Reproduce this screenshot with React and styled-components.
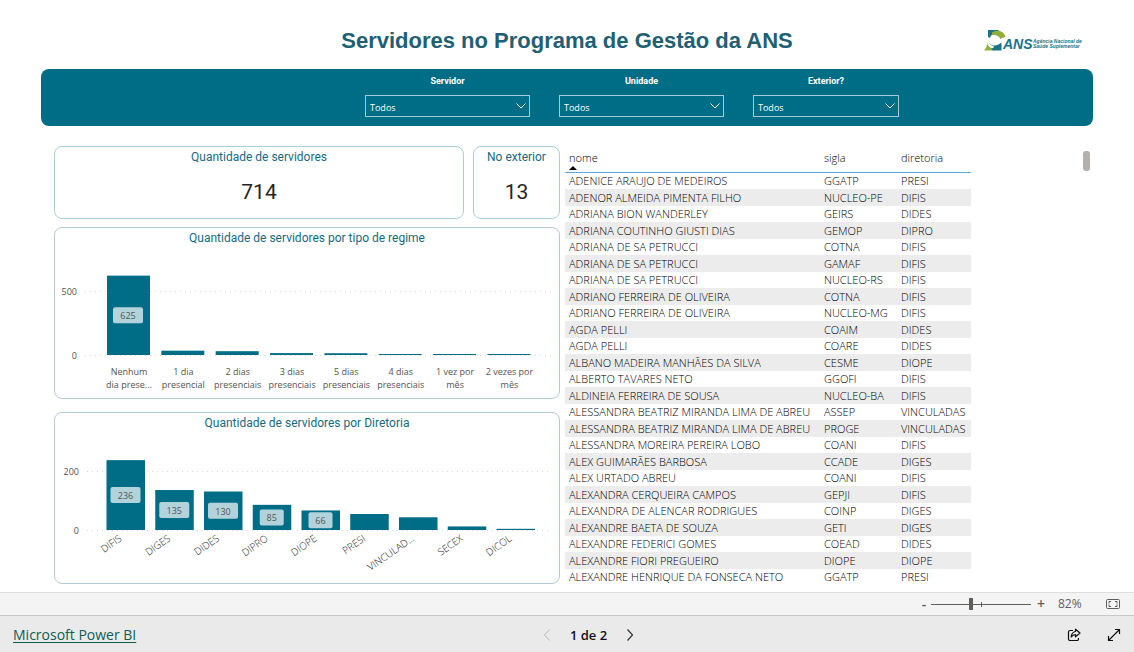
import { useState } from "react";
import styled, { createGlobalStyle } from "styled-components";

const UI_FONT = `"Open Sans", "Noto Sans", sans-serif`;
const TITLE_FONT = `Roboto, "Liberation Sans", sans-serif`;
const TEAL = "#006d87";

const filters = [
  { id: "servidor", label: "Servidor", width: 165 },
  { id: "unidade", label: "Unidade", width: 165 },
  { id: "exterior", label: "Exterior?", width: 146 },
];

const regimes = [
  { lines: ["Nenhum", "dia prese..."], value: 625 },
  { lines: ["1 dia", "presencial"], value: 34 },
  { lines: ["2 dias", "presenciais"], value: 30 },
  { lines: ["3 dias", "presenciais"], value: 15 },
  { lines: ["5 dias", "presenciais"], value: 14 },
  { lines: ["4 dias", "presenciais"], value: 8 },
  { lines: ["1 vez por", "mês"], value: 8 },
  { lines: ["2 vezes por", "mês"], value: 8 },
];

const diretorias = [
  { name: "DIFIS", value: 236 },
  { name: "DIGES", value: 135 },
  { name: "DIDES", value: 130 },
  { name: "DIPRO", value: 85 },
  { name: "DIOPE", value: 66 },
  { name: "PRESI", value: 54 },
  { name: "VINCULAD...", value: 43 },
  { name: "SECEX", value: 12 },
  { name: "DICOL", value: 4 },
];

const servidores = [
  ["ADENICE ARAUJO DE MEDEIROS", "GGATP", "PRESI"],
  ["ADENOR ALMEIDA PIMENTA FILHO", "NUCLEO-PE", "DIFIS"],
  ["ADRIANA BION WANDERLEY", "GEIRS", "DIDES"],
  ["ADRIANA COUTINHO GIUSTI DIAS", "GEMOP", "DIPRO"],
  ["ADRIANA DE SA PETRUCCI", "COTNA", "DIFIS"],
  ["ADRIANA DE SA PETRUCCI", "GAMAF", "DIFIS"],
  ["ADRIANA DE SA PETRUCCI", "NUCLEO-RS", "DIFIS"],
  ["ADRIANO FERREIRA DE OLIVEIRA", "COTNA", "DIFIS"],
  ["ADRIANO FERREIRA DE OLIVEIRA", "NUCLEO-MG", "DIFIS"],
  ["AGDA PELLI", "COAIM", "DIDES"],
  ["AGDA PELLI", "COARE", "DIDES"],
  ["ALBANO MADEIRA MANHÃES DA SILVA", "CESME", "DIOPE"],
  ["ALBERTO TAVARES NETO", "GGOFI", "DIFIS"],
  ["ALDINEIA FERREIRA DE SOUSA", "NUCLEO-BA", "DIFIS"],
  ["ALESSANDRA BEATRIZ MIRANDA LIMA DE ABREU", "ASSEP", "VINCULADAS"],
  ["ALESSANDRA BEATRIZ MIRANDA LIMA DE ABREU", "PROGE", "VINCULADAS"],
  ["ALESSANDRA MOREIRA PEREIRA LOBO", "COANI", "DIFIS"],
  ["ALEX GUIMARÃES BARBOSA", "CCADE", "DIGES"],
  ["ALEX URTADO ABREU", "COANI", "DIFIS"],
  ["ALEXANDRA CERQUEIRA CAMPOS", "GEPJI", "DIFIS"],
  ["ALEXANDRA DE ALENCAR RODRIGUES", "COINP", "DIGES"],
  ["ALEXANDRE BAETA DE SOUZA", "GETI", "DIGES"],
  ["ALEXANDRE FEDERICI GOMES", "COEAD", "DIDES"],
  ["ALEXANDRE FIORI PREGUEIRO", "DIOPE", "DIOPE"],
  ["ALEXANDRE HENRIQUE DA FONSECA NETO", "GGATP", "PRESI"],
];

function AnsLogo() {
  return (
    <Logo viewBox="0 0 100 22" role="img" aria-label="ANS">
      <path d="M4 0h10l3 2C11 2 7 4 6 8L4 7z" fill="#1a7488" />
      <path d="M8 2.500C13-1 20 1 21.500 7c-2 0-3.500 1-5 2C15 6 12 4.500 8 5z" fill="#94ae3c" />
      <path d="M3 11.500c0 4 3 7 8 7.500L10 20.500H0c2-2 3.500-5 3-9z" fill="#94ae3c" />
      <path d="M5 13c3 3.500 8 3.500 12.500-.5v8H9l-2-2c2 0 3-1 3-2-2-.5-4-1.500-5-3.500z" fill="#1a7488" />
      <LogoText x="19" y="19" $size={14}>ANS</LogoText>
      <LogoText x="49" y="13" $size={5}>Agência Nacional de</LogoText>
      <LogoText x="49" y="18" $size={5}>Saúde Suplementar</LogoText>
    </Logo>
  );
}

function Badge({ x, y, value }) {
  const width = value > 99 ? 30 : 24;
  return (
    <>
      <rect x={x - width / 2} y={y - 8} width={width} height="16" rx="2" fill="#b2d3dc" />
      <ChartText x={x} y={y + 4} textAnchor="middle">{value}</ChartText>
    </>
  );
}

function RegimeChart() {
  const zero = 107;
  const scale = 0.127;
  return (
    <Chart viewBox="0 0 504 150" role="img" aria-label="Servidores por tipo de regime">
      <GridLine x1="30" x2="497" y1="43.5" y2="43.5" />
      <GridLine x1="30" x2="497" y1="107.5" y2="107.5" />
      <ChartText x="22" y="47" textAnchor="end">500</ChartText>
      <ChartText x="22" y="111" textAnchor="end">0</ChartText>
      {regimes.map((item, i) => {
        const x = 52 + i * 54.35;
        const height = item.value * scale;
        return (
          <g key={i}>
            <rect x={x} y={zero - height} width="43" height={height} fill={TEAL} />
            {item.value > 60 && (
              <Badge x={x + 21} y={zero - height / 2} value={item.value} />
            )}
            <ChartText x={x + 22} y="127" textAnchor="middle">{item.lines[0]}</ChartText>
            <ChartText x={x + 22} y="140" textAnchor="middle">{item.lines[1]}</ChartText>
          </g>
        );
      })}
    </Chart>
  );
}

function DiretoriaChart() {
  const zero = 97;
  const scale = 0.296;
  return (
    <Chart viewBox="0 0 504 150" role="img" aria-label="Servidores por diretoria">
      <GridLine x1="32" x2="497" y1="38.5" y2="38.5" />
      <GridLine x1="32" x2="497" y1="97.5" y2="97.5" />
      <ChartText x="24" y="42" textAnchor="end">200</ChartText>
      <ChartText x="24" y="101" textAnchor="end">0</ChartText>
      {diretorias.map((item, i) => {
        const x = 51.5 + i * 48.75;
        const height = item.value * scale;
        return (
          <g key={item.name}>
            <rect x={x} y={zero - height} width="38.5" height={height} fill={TEAL} />
            {item.value > 60 && (
              <Badge x={x + 19} y={zero - height / 2} value={item.value} />
            )}
            <AxisName
              textAnchor="end"
              transform={`translate(${x + 16} 107) rotate(-35)`}
            >
              {item.name}
            </AxisName>
          </g>
        );
      })}
    </Chart>
  );
}

export default function App() {
  const [zoom, setZoom] = useState(40);

  return (
    <Page>
      <GlobalStyle />
      <Header>
        <Title>Servidores no Programa de Gestão da ANS</Title>
        <AnsLogo />
      </Header>

      <FilterBar>
        {filters.map((filter) => (
          <Filter key={filter.id} $width={filter.width}>
            <FilterLabel htmlFor={filter.id}>{filter.label}</FilterLabel>
            <SelectBox>
              <Select id={filter.id}>
                <option>Todos</option>
              </Select>
              <SelectArrow viewBox="0 0 10 6">
                <path d="M.5.5 5 5 9.5.5" />
              </SelectArrow>
            </SelectBox>
          </Filter>
        ))}
      </FilterBar>

      <Content>
        <Column>
          <Cards>
            <Card>
              <PanelTitle>Quantidade de servidores</PanelTitle>
              <CardValue>714</CardValue>
            </Card>
            <Card>
              <PanelTitle>No exterior</PanelTitle>
              <CardValue>13</CardValue>
            </Card>
          </Cards>
          <Panel>
            <PanelTitle>Quantidade de servidores por tipo de regime</PanelTitle>
            <RegimeChart />
          </Panel>
          <Panel $spaced>
            <PanelTitle>Quantidade de servidores por Diretoria</PanelTitle>
            <DiretoriaChart />
          </Panel>
        </Column>

        <TableArea>
          <Table>
            <thead>
              <tr>
                <HeadCell $width={255} aria-sort="ascending">
                  nome
                  <SortMark viewBox="0 0 8 4">
                    <path d="M0 4 4 0l4 4z" />
                  </SortMark>
                </HeadCell>
                <HeadCell $width={77}>sigla</HeadCell>
                <HeadCell $width={74}>diretoria</HeadCell>
              </tr>
            </thead>
            <tbody>
              {servidores.map(([nome, sigla, diretoria], i) => (
                <Row key={i}>
                  <Cell>{nome}</Cell>
                  <Cell>{sigla}</Cell>
                  <Cell>{diretoria}</Cell>
                </Row>
              ))}
            </tbody>
          </Table>
          <ScrollThumb />
        </TableArea>
      </Content>

      <ZoomBar>
        <ZoomButton aria-label="Reduzir" onClick={() => setZoom(Math.max(0, zoom - 5))}>
          -
        </ZoomButton>
        <ZoomRange
          type="range"
          aria-label="Zoom"
          value={zoom}
          onChange={(e) => setZoom(Number(e.target.value))}
        />
        <ZoomButton aria-label="Ampliar" onClick={() => setZoom(Math.min(100, zoom + 5))}>
          +
        </ZoomButton>
        <ZoomValue>82%</ZoomValue>
        <IconButton aria-label="Ajustar à página">
          <svg width="14" height="12" viewBox="0 0 14 12" fill="none" stroke="#605e5c">
            <rect x=".5" y="1.5" width="13" height="9" rx="1" />
            <path d="M5 3.5H3v2M3 6.500v2h2M9 3.500h2v2M11 6.500v2H9" />
          </svg>
        </IconButton>
      </ZoomBar>

      <Footer>
        <BrandLink href="#">Microsoft Power BI</BrandLink>
        <Pager>
          <IconButton aria-label="Página anterior" disabled>
            <svg width="8" height="12" viewBox="0 0 8 12" fill="none" stroke="#bdbbb9">
              <path d="M6.500.500 1.500 6l5 5.500" />
            </svg>
          </IconButton>
          <PageLabel>1 de 2</PageLabel>
          <IconButton aria-label="Próxima página">
            <svg width="8" height="12" viewBox="0 0 8 12" fill="none" stroke="#333" strokeWidth="1.200">
              <path d="M1.500.500l5 5.500-5 5.500" />
            </svg>
          </IconButton>
        </Pager>
        <Actions>
          <IconButton aria-label="Compartilhar">
            <svg width="14" height="14" viewBox="0 0 14 14" fill="none" stroke="#111" strokeWidth="1.200" strokeLinejoin="round">
              <path d="M6 2.500H3A1.500 1.500 0 0 0 1.500 4v7A1.500 1.500 0 0 0 3 12.500h7a1.500 1.500 0 0 0 1.500-1.500v-1" />
              <path d="M8.500 1.200 13 5 8.500 8.800V6.700C6.600 6.700 5.200 7.500 4.200 9c.2-3 1.600-5 4.300-5.500z" />
            </svg>
          </IconButton>
          <IconButton aria-label="Tela cheia">
            <svg width="14" height="14" viewBox="0 0 14 14" fill="none" stroke="#111" strokeWidth="1.200">
              <path d="M1.500 12.500l11-11M8 1.500h4.500V6M1.500 8v4.500H6" />
            </svg>
          </IconButton>
        </Actions>
      </Footer>
    </Page>
  );
}

const GlobalStyle = createGlobalStyle`
  * {
    box-sizing: border-box;
  }
  body {
    margin: 0;
    background: #fff;
    font-family: ${UI_FONT};
  }
`;

const Page = styled.div`
  display: flex;
  flex-direction: column;
  min-height: 100vh;
`;

const Header = styled.header`
  display: grid;
  grid-template-columns: 1fr auto 1fr;
  align-items: center;
  height: 69px;
  padding: 12px 50px 0;
`;

const Title = styled.h1`
  grid-column: 2;
  margin: 0;
  font-family: "Liberation Sans", sans-serif;
  font-size: 22px;
  line-height: 28px;
  font-weight: 700;
  color: #215f73;
`;

const Logo = styled.svg`
  width: 100px;
  height: 22px;
  justify-self: end;
`;

const LogoText = styled.text`
  font-family: "Liberation Sans", sans-serif;
  font-size: ${({ $size }) => $size}px;
  font-weight: 700;
  font-style: italic;
  fill: #1a7488;
`;

const FilterBar = styled.section`
  display: flex;
  justify-content: center;
  gap: 29px;
  margin: 0 41px;
  padding: 5px 0 9px 130px;
  border-radius: 8px;
  background: ${TEAL};
`;

const Filter = styled.div`
  width: ${({ $width }) => $width}px;
`;

const FilterLabel = styled.label`
  display: block;
  margin-bottom: 7px;
  font-family: ${TITLE_FONT};
  font-size: 9px;
  line-height: 14px;
  font-weight: 700;
  text-align: center;
  color: #fff;
`;

const SelectBox = styled.div`
  position: relative;
`;

const Select = styled.select`
  display: block;
  width: 100%;
  height: 22px;
  padding: 2px 4px 0;
  border: 1px solid #a5ccd6;
  border-radius: 0;
  appearance: none;
  background: transparent;
  font-family: ${UI_FONT};
  font-size: 9px;
  color: #fff;
`;

const SelectArrow = styled.svg`
  position: absolute;
  top: 8px;
  right: 4px;
  width: 10px;
  height: 6px;
  fill: none;
  stroke: #fff;
  pointer-events: none;
`;

const Content = styled.main`
  display: grid;
  grid-template-columns: minmax(0, 506fr) minmax(0, 525fr);
  gap: 5px;
  flex: 1;
  padding: 20px 44px 7px 54px;
`;

const Column = styled.div`
  display: flex;
  flex-direction: column;
  gap: 8px;
`;

const Cards = styled.div`
  display: grid;
  grid-template-columns: minmax(0, 410fr) minmax(0, 87fr);
  gap: 9px;
`;

const Card = styled.section`
  padding: 1px 0 12px;
  border: 1px solid #a9cfd6;
  border-radius: 8px;
  text-align: center;
`;

const Panel = styled.section`
  margin-top: ${({ $spaced }) => ($spaced ? 5 : 0)}px;
  padding-top: 1px;
  border: 1px solid #b4cad4;
  border-radius: 8px;
`;

const PanelTitle = styled.h2`
  margin: 0 0 1px;
  font-family: ${TITLE_FONT};
  font-size: 12px;
  line-height: 18px;
  font-weight: 400;
  text-align: center;
  color: #156a83;
`;

const CardValue = styled.p`
  margin: 12px 0 0;
  font-family: ${TITLE_FONT};
  font-size: 21px;
  line-height: 28px;
  color: #252423;
`;

const Chart = styled.svg`
  display: block;
  width: 100%;
`;

const ChartText = styled.text`
  font-family: ${UI_FONT};
  font-size: 9px;
  fill: #555352;
`;

const AxisName = styled(ChartText)`
  font-size: 10px;
  font-weight: 300;
  fill: #222;
`;

const GridLine = styled.line`
  stroke: #d6d6d6;
  stroke-dasharray: 1 4;
`;

const TableArea = styled.div`
  display: flex;
  justify-content: space-between;
  align-items: flex-start;
`;

const Table = styled.table`
  width: 406px;
  table-layout: fixed;
  border-spacing: 0;
  font-size: 11px;
  font-weight: 300;
  color: #000;
`;

const HeadCell = styled.th`
  width: ${({ $width }) => $width}px;
  height: 27px;
  padding: 4px 4px 0;
  border-bottom: 1px solid #5aa9e0;
  font-weight: 300;
  line-height: 16px;
  text-align: left;
  vertical-align: top;
`;

const SortMark = styled.svg`
  display: block;
  width: 8px;
  height: 4px;
`;

const Row = styled.tr`
  height: 16px;

  &:nth-child(even) {
    height: 17px;
    background: #ececec;
  }
`;

const Cell = styled.td`
  padding: 0 4px;
  line-height: 16px;
  white-space: nowrap;
`;

const ScrollThumb = styled.div`
  width: 7px;
  height: 20px;
  margin-top: 5px;
  border-radius: 3px;
  background: #b3b0ad;
`;

const ZoomBar = styled.div`
  display: flex;
  justify-content: flex-end;
  align-items: center;
  height: 23px;
  padding-right: 14px;
  border-top: 1px solid #dedede;
  background: #f4f4f4;
`;

const ZoomButton = styled.button`
  width: 10px;
  margin: 0 2px;
  padding: 0;
  border: 0;
  background: none;
  font-family: ${UI_FONT};
  font-size: 14px;
  line-height: 20px;
  font-weight: 600;
  color: #605e5c;
  cursor: pointer;
`;

const ZoomRange = styled.input`
  width: 100px;
  height: 12px;
  margin: 0 3px 0 0;
  appearance: none;
  background:
    linear-gradient(#605e5c, #605e5c) 50% 50% / 1px 5px no-repeat,
    linear-gradient(#605e5c, #605e5c) 50% 50% / 100% 1px no-repeat;

  &::-webkit-slider-thumb {
    width: 4px;
    height: 12px;
    appearance: none;
    background: #605e5c;
  }
`;

const ZoomValue = styled.span`
  width: 36px;
  margin: 0 12px 0 10px;
  font-size: 12px;
  line-height: 20px;
  color: #605e5c;
`;

const IconButton = styled.button`
  display: flex;
  padding: 0;
  border: 0;
  background: none;
  cursor: pointer;
`;

const Footer = styled.footer`
  display: grid;
  grid-template-columns: 1fr auto 1fr;
  align-items: center;
  height: 37px;
  padding: 2px 13px 0;
  border-top: 1px solid #c8c8c8;
  background: #eaeaea;
`;

const BrandLink = styled.a`
  justify-self: start;
  font-size: 14px;
  line-height: 20px;
  color: #0f5c50;
  text-underline-offset: 2px;
`;

const Pager = styled.nav`
  display: flex;
  align-items: center;
  gap: 19px;
  margin-left: 43px;
`;

const PageLabel = styled.span`
  font-size: 13px;
  line-height: 20px;
  font-weight: 600;
  color: #111;
`;

const Actions = styled.div`
  display: flex;
  justify-content: flex-end;
  gap: 26px;
`;
